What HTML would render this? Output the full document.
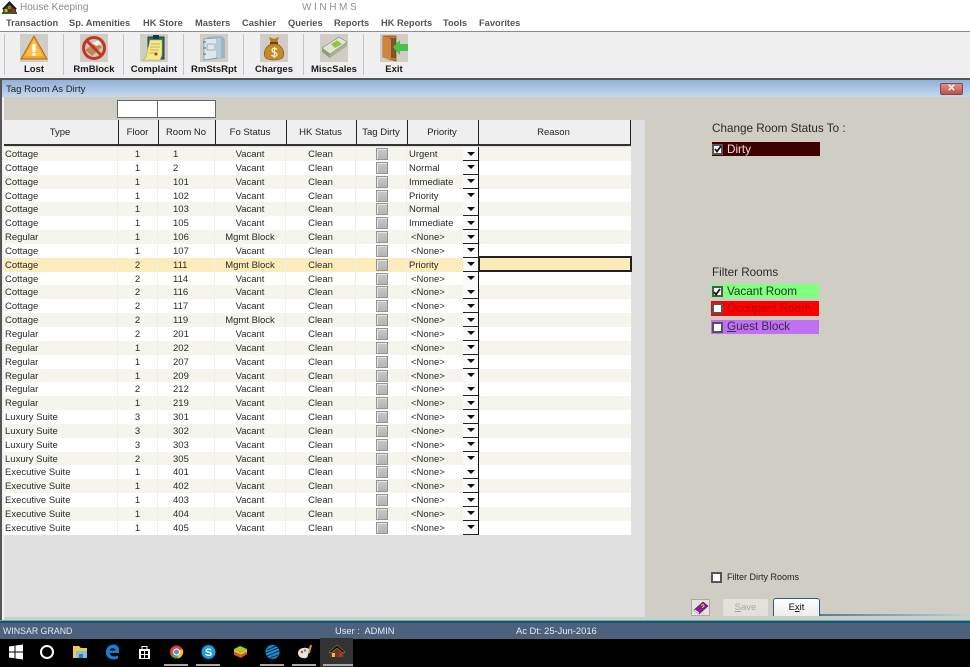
<!DOCTYPE html>
<html><head><meta charset="utf-8"><title>House Keeping</title>
<style>
*{box-sizing:border-box}
html,body{margin:0;padding:0}
body{width:970px;height:667px;overflow:hidden;background:#fff;position:relative;font-family:"Liberation Sans",sans-serif;font-size:9.5px;color:#2a2a2a;filter:blur(.3px)}
.a{position:absolute}
.m{position:absolute;top:16.500px;font-weight:bold;font-size:9.300px;color:#555;line-height:12px;white-space:nowrap}
.sep{position:absolute;top:34px;width:1px;height:41px;background:#c4c4c4}
.ic{position:absolute;top:34px;width:28px;height:28px;background:#d0cdc4}
.tl{position:absolute;top:64px;width:60px;text-align:center;font-weight:bold;font-size:9.500px;line-height:12px;color:#1a1a1a}
.h{position:absolute;top:120px;height:26px;line-height:25px;padding-right:2px;text-align:center;font-size:9.500px;background:#efefef;color:#222;border-right:1.5px solid #222;border-bottom:2px solid #333}
#g{position:absolute;left:4px;top:147px;width:627px}
.r{height:13.85px;position:relative;background:#fff;white-space:nowrap}
.r:nth-child(odd){background:#f5f5ee}
.r.s{background:#fdecbb}
.r span{position:absolute;top:0;text-align:center;border-right:1px solid #f0f0ea;height:100%;line-height:15.85px}
.t{left:0;width:114px;text-align:left!important;padding-left:1px}
.f{left:114px;width:40px}
.n{left:154px;width:57px;text-align:left!important;padding-left:15px}
.o{left:211px;width:71px}
.k{left:282px;width:70px}
.c{left:352px;width:51px}
.c:after{content:"";position:absolute;left:19.500px;top:1px;width:10px;height:10px;background:linear-gradient(#c8c8c8,#b4b4b4);border:1px solid #949494;box-shadow:inset 1px 1px 0 #e4e4e4}
.p{left:403px;width:72px;text-align:left!important;padding-left:2px;border-right:1.5px solid #111!important}
.p:after{content:"";position:absolute;right:0;top:0;width:15px;height:13px;background:#fafafa;border-bottom:1.5px solid #222}
.p:before{content:"";position:absolute;right:3.500px;top:4.500px;z-index:1;border-left:4px solid transparent;border-right:4px solid transparent;border-top:4px solid #111}
.q{padding-left:4px!important}
.cb{position:absolute;width:11px;height:11px;background:#fff;border:2px solid #555}
.cb svg{position:absolute;left:-.5px;top:-.5px}
.lb{position:absolute;font-size:11.700px;line-height:14px;white-space:nowrap}
.u{position:absolute;top:664px;height:2px;width:24px;background:#aaa}
</style></head><body>

<svg class="a" style="left:2px;top:1px" width="15" height="13" viewBox="0 0 15 13"><path d="M1 7L7.500 1L14 7V12H1Z" fill="#5a3a18"/><path d="M0 8L7.500 0L15 8L12.500 8L7.500 3L2.500 8Z" fill="#1c1c1c"/><rect x="2.500" y="8" width="3" height="4" fill="#d6b13a"/><rect x="9.500" y="8" width="3" height="4" fill="#b02a20"/><rect x="6" y="5" width="3" height="3" fill="#5a9a40"/><rect x="0" y="11" width="15" height="2" fill="#3a5a28"/></svg>
<div class="a" style="left:20px;top:2px;font-size:10px;line-height:12px;color:#8a8a8a">House Keeping</div>
<div class="a" style="left:302px;top:2px;font-size:10px;line-height:12px;color:#909090;letter-spacing:2.600px">WINHMS</div>

<div class="m" style="left:6px">Transaction</div>
<div class="m" style="left:69px">Sp. Amenities</div>
<div class="m" style="left:143px">HK Store</div>
<div class="m" style="left:195px">Masters</div>
<div class="m" style="left:242px">Cashier</div>
<div class="m" style="left:288px">Queries</div>
<div class="m" style="left:334px">Reports</div>
<div class="m" style="left:381px">HK Reports</div>
<div class="m" style="left:443px">Tools</div>
<div class="m" style="left:479px">Favorites</div>

<div class="a" style="left:0;top:31px;width:970px;height:49px;background:#efefef;border-top:1.5px solid #8c8c8c;border-bottom:2.500px solid #555"></div>
<div class="sep" style="left:4px"></div><div class="sep" style="left:63px"></div><div class="sep" style="left:123px"></div><div class="sep" style="left:183px"></div><div class="sep" style="left:243px"></div><div class="sep" style="left:303px"></div><div class="sep" style="left:363px"></div>

<div class="ic" style="left:20px"><svg width="28" height="28" viewBox="0 0 28 28"><path d="M14 2L27 25H1Z" fill="#f5a623" stroke="#b8651a" stroke-width="1"/><path d="M14 5L23 22H5Z" fill="#fbc04a"/><rect x="12.500" y="10" width="3" height="8" fill="#fff"/><circle cx="14" cy="20.500" r="1.700" fill="#fff"/></svg></div>
<div class="ic" style="left:80px"><svg width="28" height="28" viewBox="0 0 28 28"><path d="M7 6L20 3L25 14L16 25L5 18Z" fill="#c8c8c0"/><path d="M5 16L16 9L22 13L12 22Z" fill="#b98a5a"/><path d="M13 9L19 6L21 10L16 12Z" fill="#f4f4f0"/><circle cx="14" cy="14" r="10.500" fill="none" stroke="#cc3222" stroke-width="3"/><path d="M7 7L21 21" stroke="#cc3222" stroke-width="3"/></svg></div>
<div class="ic" style="left:140px"><svg width="28" height="28" viewBox="0 0 28 28"><path d="M8 3H24V25H8Z" fill="#2a6a70" stroke="#1c4044"/><path d="M6 23L10 6H22V21L20 26H3Z" fill="#f3e98a" stroke="#b9a84a" stroke-width=".6"/><rect x="13" y="1" width="6" height="4" fill="#1c3a40"/><path d="M11 10H20M10 13H20M10 16H19M9 19H16" stroke="#c9b35a" stroke-width="1"/><circle cx="16" cy="20" r="1.500" fill="#c02a2a"/></svg></div>
<div class="ic" style="left:200px"><svg width="28" height="28" viewBox="0 0 28 28"><path d="M7 3L22 2L25 5V24L10 26L7 23Z" fill="#9bb7c4"/><path d="M4 5L17 4V24L4 26Z" fill="#dce8ee" stroke="#7f99a6" stroke-width=".8"/><path d="M17 4H21V24H17Z" fill="#b5ccd6"/><rect x="7" y="10" width="8" height="6" fill="none" stroke="#9ab2bf"/><path d="M3 8H6M3 14H6M3 20H6" stroke="#666"/></svg></div>
<div class="ic" style="left:260px"><svg width="28" height="28" viewBox="0 0 28 28"><path d="M9 3L14 5L19 3L17 9H11Z" fill="#b77a22"/><rect x="10" y="8" width="8" height="2" fill="#6a4010"/><path d="M11 10C5 13 3 19 5 23C7 27 21 27 23 23C25 19 23 13 17 10Z" fill="#c58a2c" stroke="#8c5a16" stroke-width=".7"/><path d="M17 15.500C16 14 12 14 12 16.300C12 19 17 18 17 20.500C17 23 12.500 22.500 11.500 21M14.500 13V24" stroke="#fff2c8" stroke-width="1.300" fill="none"/></svg></div>
<div class="ic" style="left:320px"><svg width="28" height="28" viewBox="0 0 28 28"><path d="M2 17L19 6L27 11L10 23Z" fill="#7c8a6c" stroke="#555" stroke-width=".5"/><path d="M2 14L19 3L27 8L10 20Z" fill="#dfe6cf" stroke="#667" stroke-width=".5"/><path d="M2 14V18L10 24V20Z" fill="#8f9a80"/><path d="M10 20V24L27 12V8Z" fill="#a8b098"/><path d="M11 10L17 6.500L22 10L15 14Z" fill="#8fc340"/></svg></div>
<div class="ic" style="left:380px"><svg width="28" height="28" viewBox="0 0 28 28"><path d="M3 2H16V27L3 23Z" fill="#c87a30" stroke="#8c4d14" stroke-width=".7"/><path d="M6 4H16V24H6Z" fill="#3d3a34" opacity=".55"/><path d="M3 2L11 5V27L3 23Z" fill="#d0853c"/><path d="M13 13L20 6V10H28V17H20V21Z" fill="#48c348"/></svg></div>

<div class="tl" style="left:4px">Lost</div>
<div class="tl" style="left:64px">RmBlock</div>
<div class="tl" style="left:124px">Complaint</div>
<div class="tl" style="left:184px">RmStsRpt</div>
<div class="tl" style="left:244px">Charges</div>
<div class="tl" style="left:304px">MiscSales</div>
<div class="tl" style="left:364px">Exit</div>

<div class="a" style="left:0;top:80px;width:970px;height:17px;background:linear-gradient(#8fb1d8,#c6d9ec)"></div>
<div class="a" style="left:6px;top:83.500px;font-size:9.600px;line-height:12px;color:#222">Tag Room As Dirty</div>
<div class="a" style="left:940px;top:83px;width:23px;height:12px;background:linear-gradient(#e09088,#c05048);border:1px solid #7a4a50;border-radius:2px;color:#fff;font-size:10px;line-height:10px;text-align:center;font-weight:bold">✕</div>

<div class="a" style="left:0;top:97px;width:970px;height:523px;background:#d0cdc4"></div>
<div class="a" style="left:0;top:80px;width:2px;height:541px;background:#555"></div>
<div class="a" style="left:2px;top:97px;width:2px;height:523px;background:#f2f2f2"></div>
<div class="a" style="left:117px;top:100px;width:41px;height:18px;background:#fff;border:1px solid #666"></div>
<div class="a" style="left:157px;top:100px;width:59px;height:18px;background:#fff;border:1px solid #666"></div>

<div class="a" style="left:4px;top:120px;width:641px;height:497px;background:#e0e0e0"></div>
<div class="h" style="left:4px;width:115px">Type</div>
<div class="h" style="left:119px;width:40px">Floor</div>
<div class="h" style="left:159px;width:57px">Room No</div>
<div class="h" style="left:216px;width:71px">Fo Status</div>
<div class="h" style="left:287px;width:70px">HK Status</div>
<div class="h" style="left:357px;width:51px">Tag Dirty</div>
<div class="h" style="left:408px;width:71px">Priority</div>
<div class="h" style="left:479px;width:152px">Reason</div>

<div id="g">
<div class="r"><span class="t">Cottage</span><span class="f">1</span><span class="n">1</span><span class="o">Vacant</span><span class="k">Clean</span><span class="c"></span><span class="p">Urgent</span></div>
<div class="r"><span class="t">Cottage</span><span class="f">1</span><span class="n">2</span><span class="o">Vacant</span><span class="k">Clean</span><span class="c"></span><span class="p">Normal</span></div>
<div class="r"><span class="t">Cottage</span><span class="f">1</span><span class="n">101</span><span class="o">Vacant</span><span class="k">Clean</span><span class="c"></span><span class="p">Immediate</span></div>
<div class="r"><span class="t">Cottage</span><span class="f">1</span><span class="n">102</span><span class="o">Vacant</span><span class="k">Clean</span><span class="c"></span><span class="p">Priority</span></div>
<div class="r"><span class="t">Cottage</span><span class="f">1</span><span class="n">103</span><span class="o">Vacant</span><span class="k">Clean</span><span class="c"></span><span class="p">Normal</span></div>
<div class="r"><span class="t">Cottage</span><span class="f">1</span><span class="n">105</span><span class="o">Vacant</span><span class="k">Clean</span><span class="c"></span><span class="p">Immediate</span></div>
<div class="r"><span class="t">Regular</span><span class="f">1</span><span class="n">106</span><span class="o">Mgmt Block</span><span class="k">Clean</span><span class="c"></span><span class="p q">&lt;None&gt;</span></div>
<div class="r"><span class="t">Cottage</span><span class="f">1</span><span class="n">107</span><span class="o">Vacant</span><span class="k">Clean</span><span class="c"></span><span class="p q">&lt;None&gt;</span></div>
<div class="r s"><span class="t">Cottage</span><span class="f">2</span><span class="n">111</span><span class="o">Mgmt Block</span><span class="k">Clean</span><span class="c"></span><span class="p">Priority</span></div>
<div class="r"><span class="t">Cottage</span><span class="f">2</span><span class="n">114</span><span class="o">Vacant</span><span class="k">Clean</span><span class="c"></span><span class="p q">&lt;None&gt;</span></div>
<div class="r"><span class="t">Cottage</span><span class="f">2</span><span class="n">116</span><span class="o">Vacant</span><span class="k">Clean</span><span class="c"></span><span class="p q">&lt;None&gt;</span></div>
<div class="r"><span class="t">Cottage</span><span class="f">2</span><span class="n">117</span><span class="o">Vacant</span><span class="k">Clean</span><span class="c"></span><span class="p q">&lt;None&gt;</span></div>
<div class="r"><span class="t">Cottage</span><span class="f">2</span><span class="n">119</span><span class="o">Mgmt Block</span><span class="k">Clean</span><span class="c"></span><span class="p q">&lt;None&gt;</span></div>
<div class="r"><span class="t">Regular</span><span class="f">2</span><span class="n">201</span><span class="o">Vacant</span><span class="k">Clean</span><span class="c"></span><span class="p q">&lt;None&gt;</span></div>
<div class="r"><span class="t">Regular</span><span class="f">1</span><span class="n">202</span><span class="o">Vacant</span><span class="k">Clean</span><span class="c"></span><span class="p q">&lt;None&gt;</span></div>
<div class="r"><span class="t">Regular</span><span class="f">1</span><span class="n">207</span><span class="o">Vacant</span><span class="k">Clean</span><span class="c"></span><span class="p q">&lt;None&gt;</span></div>
<div class="r"><span class="t">Regular</span><span class="f">1</span><span class="n">209</span><span class="o">Vacant</span><span class="k">Clean</span><span class="c"></span><span class="p q">&lt;None&gt;</span></div>
<div class="r"><span class="t">Regular</span><span class="f">2</span><span class="n">212</span><span class="o">Vacant</span><span class="k">Clean</span><span class="c"></span><span class="p q">&lt;None&gt;</span></div>
<div class="r"><span class="t">Regular</span><span class="f">1</span><span class="n">219</span><span class="o">Vacant</span><span class="k">Clean</span><span class="c"></span><span class="p q">&lt;None&gt;</span></div>
<div class="r"><span class="t">Luxury Suite</span><span class="f">3</span><span class="n">301</span><span class="o">Vacant</span><span class="k">Clean</span><span class="c"></span><span class="p q">&lt;None&gt;</span></div>
<div class="r"><span class="t">Luxury Suite</span><span class="f">3</span><span class="n">302</span><span class="o">Vacant</span><span class="k">Clean</span><span class="c"></span><span class="p q">&lt;None&gt;</span></div>
<div class="r"><span class="t">Luxury Suite</span><span class="f">3</span><span class="n">303</span><span class="o">Vacant</span><span class="k">Clean</span><span class="c"></span><span class="p q">&lt;None&gt;</span></div>
<div class="r"><span class="t">Luxury Suite</span><span class="f">2</span><span class="n">305</span><span class="o">Vacant</span><span class="k">Clean</span><span class="c"></span><span class="p q">&lt;None&gt;</span></div>
<div class="r"><span class="t">Executive Suite</span><span class="f">1</span><span class="n">401</span><span class="o">Vacant</span><span class="k">Clean</span><span class="c"></span><span class="p q">&lt;None&gt;</span></div>
<div class="r"><span class="t">Executive Suite</span><span class="f">1</span><span class="n">402</span><span class="o">Vacant</span><span class="k">Clean</span><span class="c"></span><span class="p q">&lt;None&gt;</span></div>
<div class="r"><span class="t">Executive Suite</span><span class="f">1</span><span class="n">403</span><span class="o">Vacant</span><span class="k">Clean</span><span class="c"></span><span class="p q">&lt;None&gt;</span></div>
<div class="r"><span class="t">Executive Suite</span><span class="f">1</span><span class="n">404</span><span class="o">Vacant</span><span class="k">Clean</span><span class="c"></span><span class="p q">&lt;None&gt;</span></div>
<div class="r"><span class="t">Executive Suite</span><span class="f">1</span><span class="n">405</span><span class="o">Vacant</span><span class="k">Clean</span><span class="c"></span><span class="p q">&lt;None&gt;</span></div>
</div>
<div class="a" style="left:478px;top:256px;width:154px;height:16px;background:#fdecbb;border:2px solid #222"></div>

<div class="lb" style="left:712px;top:122px">Change Room Status To :</div>
<div class="a" style="left:712px;top:142px;width:108px;height:14px;background:#3f0000"></div>
<div class="cb" style="left:712px;top:143.500px"><svg width="8" height="8" viewBox="0 0 8 8"><path d="M1 4L3 6.500L7 1" stroke="#111" stroke-width="1.800" fill="none"/></svg></div>
<div class="lb" style="left:727px;top:143px;color:#e8dcdc">Dirty</div>

<div class="lb" style="left:712px;top:266px">Filter Rooms</div>
<div class="a" style="left:711px;top:284px;width:108px;height:14px;background:#80ff80"></div>
<div class="cb" style="left:711.500px;top:286px"><svg width="8" height="8" viewBox="0 0 8 8"><path d="M1 4L3 6.500L7 1" stroke="#111" stroke-width="1.800" fill="none"/></svg></div>
<div class="lb" style="left:727px;top:285px;color:#1a3a1a">Vacant Room</div>
<div class="a" style="left:711px;top:301px;width:108px;height:15px;background:#ff0000"></div>
<div class="cb" style="left:711.500px;top:303px"></div>
<div class="lb" style="left:727px;top:302px;color:#b00000">Occupied Room</div>
<div class="a" style="left:711px;top:320px;width:108px;height:14px;background:#c070f0"></div>
<div class="cb" style="left:711.500px;top:322px"></div>
<div class="lb" style="left:727px;top:320px;color:#3a2a50"><u>G</u>uest Block</div>

<div class="cb" style="left:711px;top:572px"></div>
<div class="a" style="left:727px;top:571px;font-size:9px;line-height:12px;color:#222">Filter Dirty Rooms</div>

<div class="a" style="left:691px;top:599px;width:19px;height:17px;background:#e6e3dc;border:1px solid #aaa"><svg width="17" height="15" viewBox="0 0 17 15" style="display:block"><path d="M2 10L11 2L16 6L7 14Z" fill="#8a1c9c" stroke="#4a0f55" stroke-width=".6"/><path d="M2 10L7 14L7 12.500L3 9.500Z" fill="#fff"/><path d="M9 5.500C10 4 12 4.500 12 5.700C12 6.800 10.500 6.800 10.500 8" stroke="#f2d23c" stroke-width="1" fill="none"/></svg></div>
<div class="a" style="left:723px;top:599px;width:45px;height:17px;background:#e3e1da;border-radius:2px;text-align:center;line-height:17px;color:#a8a8a0;font-size:9.500px"><u>S</u>ave</div>
<div class="a" style="left:773px;top:598px;width:47px;height:18px;background:linear-gradient(#fff,#ececec);border:1px solid #2f5a80;border-bottom:0;border-radius:3px 3px 0 0;text-align:center;line-height:18px;color:#111;font-size:9.500px">E<u>x</u>it</div>
<div class="a" style="left:820px;top:614px;width:150px;height:2px;background:linear-gradient(90deg,#5a7a98,#c0d0dc)"></div>

<div class="a" style="left:0;top:620px;width:970px;height:1px;background:#2fc0e0"></div>
<div class="a" style="left:0;top:621px;width:970px;height:2px;background:#2c4e5a"></div>
<div class="a" style="left:0;top:623px;width:970px;height:16px;background:#4c617c"></div>
<div class="a" style="left:3px;top:625px;font-size:8.800px;line-height:12px;color:#e6eaf0">WINSAR GRAND</div>
<div class="a" style="left:335px;top:625px;font-size:9.300px;line-height:12px;color:#e6eaf0">User :&nbsp; ADMIN</div>
<div class="a" style="left:516px;top:625px;font-size:9.400px;line-height:12px;color:#e6eaf0">Ac Dt: 25-Jun-2016</div>

<div class="a" style="left:0;top:639px;width:970px;height:28px;background:#000"></div>
<div class="a" style="left:320px;top:638px;width:33px;height:29px;background:#333"></div>
<svg class="a" style="left:0;top:638px" width="360" height="28" viewBox="0 0 360 28">
<path d="M9 8.500L14.500 7.700V13.500H9ZM15.500 7.500L23 6.500V13.500H15.500ZM9 14.500H14.500V20.300L9 19.500ZM15.500 14.500H23V21.500L15.500 20.500Z" fill="#fff"/>
<circle cx="47" cy="14" r="6" fill="none" stroke="#fff" stroke-width="2"/>
<path d="M73 8H79L81 10H87V20H73Z" fill="#f3c84b"/><path d="M76 13H87V20H76Z" fill="#7ec4e0"/><rect x="79" y="16" width="4" height="4" fill="#2c7fae"/>
<path d="M106 14C106 9 110 6.500 114 6.500C117 6.500 119 9 119 12.500V15H109.500C110 18 114 19.500 118 17.500V20.500C112 23 105.500 20 106 14ZM109.500 12.500H115.500C115.500 9.500 110.500 9.500 109.500 12.500Z" fill="#1a7fd4"/>
<path d="M139 11H150V21H139Z" fill="#fff"/><path d="M142 11V8.500H147V11" stroke="#fff" stroke-width="1" fill="none"/><rect x="141" y="13" width="3" height="3" fill="#000"/><rect x="145" y="13" width="3" height="3" fill="#000"/><rect x="141" y="17" width="3" height="3" fill="#000"/><rect x="145" y="17" width="3" height="3" fill="#000"/>
<circle cx="176.500" cy="14" r="6.500" fill="#e0453a"/><path d="M176.500 14L171 17.500A6.500 6.500 0 0 0 178 20.300Z" fill="#3aa757"/><path d="M176.500 14L178 20.300A6.500 6.500 0 0 0 182.500 11Z" fill="#f8c51c"/><circle cx="176.500" cy="14" r="3" fill="#4a8bf0" stroke="#fff"/>
<circle cx="208.500" cy="14" r="7" fill="#1a9fe0"/>
<text x="208.500" y="18" text-anchor="middle" font-family="Liberation Sans" font-size="11" font-weight="bold" fill="#fff">S</text>
<path d="M234 11L240 8L247 11L241 14Z" fill="#9ecb3c"/><path d="M234 11L241 14L247 11V14L241 17L234 14Z" fill="#e8b82c"/><path d="M234 14L241 17L247 14V16L241 20L234 17Z" fill="#d8503c"/>
<circle cx="272.500" cy="14" r="7" fill="#1a8fd8"/><path d="M267 12L276 8M266 15L278 10M267 18L279 13M270 20L278 17" stroke="#0a2a48" stroke-width="1"/>
<path d="M298 15C298 11 303 9 307 10C311 11 311 14 309 15C307 16 309 19 306 20C302 21 298 19 298 15Z" fill="#e8e4da"/><circle cx="302" cy="14" r="1.200" fill="#d03a30"/><circle cx="305" cy="12.500" r="1.200" fill="#3a8ad0"/><path d="M311 7L309 15" stroke="#e09a30" stroke-width="2"/>
<path d="M330 14L337 8L344 14V19H330Z" fill="#6b3a1e"/><path d="M329 14L337 7L345 14L343 15L337 10L331 15Z" fill="#111" stroke="#d8a038" stroke-width=".5"/><rect x="332" y="15" width="3" height="4" fill="#e0c040"/><rect x="339" y="15" width="3" height="4" fill="#c03028"/>
</svg>
<div class="u" style="left:164px"></div><div class="u" style="left:196px"></div><div class="u" style="left:260px"></div><div class="u" style="left:292px"></div><div class="u" style="left:323px;width:30px"></div>
</body></html>
